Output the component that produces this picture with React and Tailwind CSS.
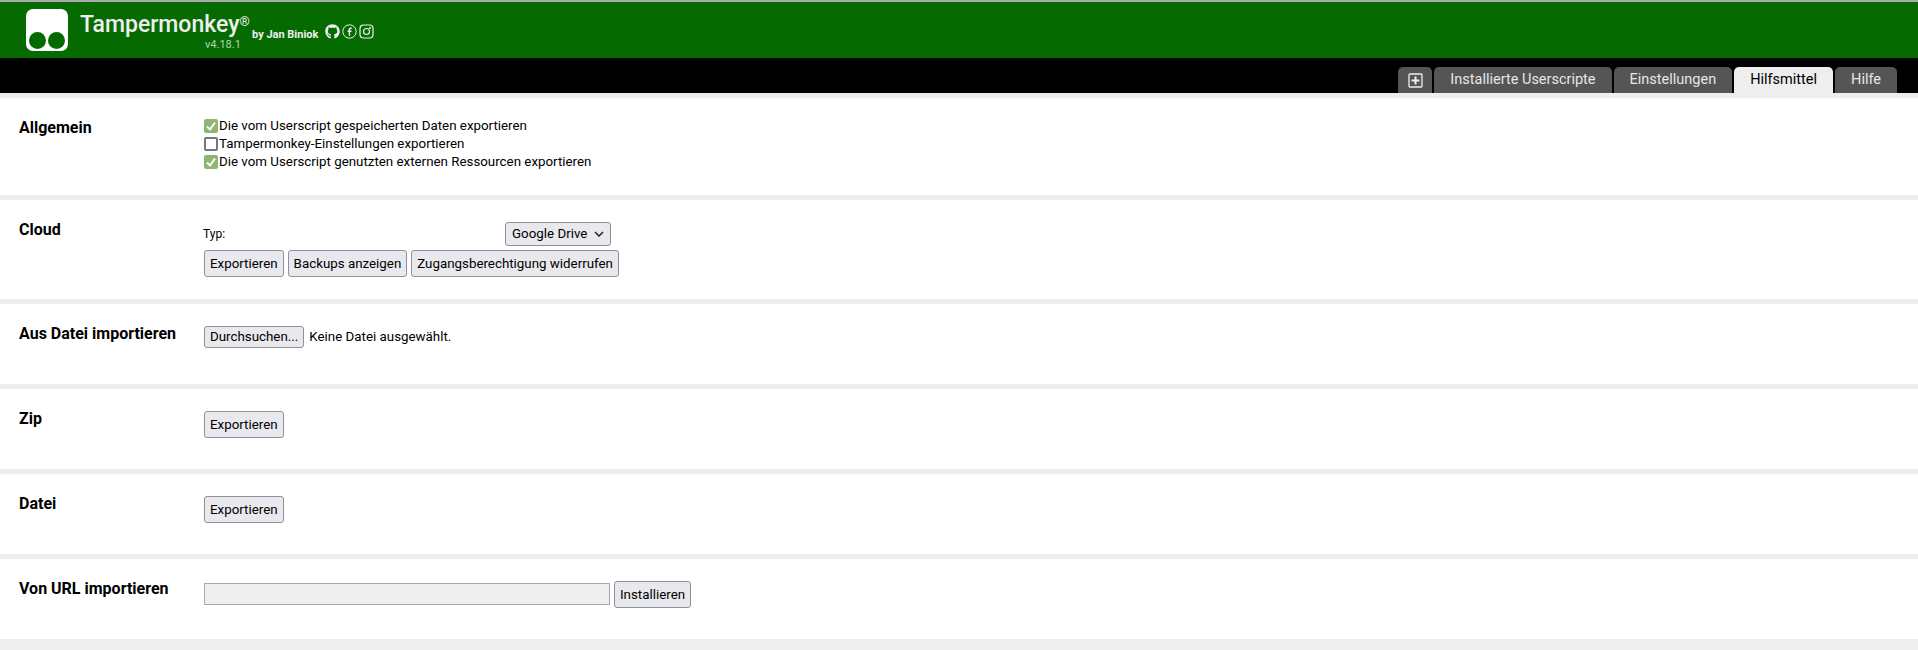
import React from "react";
import { FaGithub } from "react-icons/fa";

const sans = "font-['Roboto',sans-serif]";
const btn =
  "h-[27px] px-[5px] rounded-[3px] border border-[#8f8f9d] bg-[#e9e9ed] text-[13.33px] leading-none text-black";

const Logo = () => (
  <svg width="42" height="42" viewBox="0 0 42 42">
    <rect width="42" height="42" rx="7" fill="#fff" />
    <circle cx="11.5" cy="31.5" r="8.5" fill="#056b00" />
    <circle cx="30.5" cy="31.5" r="8.5" fill="#056b00" />
  </svg>
);

const Check = ({ checked }) =>
  checked ? (
    <span className="w-[14px] h-[14px] rounded-[2px] bg-[#8fb573] flex items-center justify-center shrink-0">
      <svg width="12" height="12" viewBox="0 0 12 12" fill="none" stroke="#fff" strokeWidth="2">
        <path d="M2 6.5 5 9.5 10 2.5" />
      </svg>
    </span>
  ) : (
    <span className="w-[14px] h-[14px] rounded-[2px] border-2 border-[#767680] bg-white shrink-0" />
  );

const Option = ({ checked, children }) => (
  <div className="flex items-center gap-px h-[18px] text-[13.33px] text-black">
    <Check checked={checked} />
    <span>{children}</span>
  </div>
);

const Section = ({ title, height, children }) => (
  <section className={`flex bg-white ${height}`}>
    <h3 className="w-[204px] shrink-0 pl-[19px] pt-[20px] text-[16px] leading-[19px] font-bold text-black">
      {title}
    </h3>
    <div className="flex-1">{children}</div>
  </section>
);

const Tab = ({ active, children }) => (
  <div
    className={`h-[26px] px-[16px] flex items-center rounded-t-[5px] text-[14.5px] ${
      active ? "bg-[#eeeeee] text-black" : "bg-[#555555] text-[#e6e6e6]"
    }`}
  >
    {children}
  </div>
);

export default function App() {
  return (
    <div className={`${sans} h-[650px] overflow-hidden bg-[#eeeeee]`}>
      {/* Kopfzeile */}
      <header className="h-[58px] border-t-2 border-[#aaaaaa] bg-[#056b00] flex items-start pl-[26px] text-white">
        <div className="pt-[7px]">
          <Logo />
        </div>
        <div className="ml-[12px] pt-[9px] w-[172px]">
          <div className="text-[23px] leading-[27px] font-medium text-[#eeeeee] whitespace-nowrap">
            Tampermonkey<sup className="text-[13px] font-normal">®</sup>
          </div>
          <div className="text-[11px] leading-[13px] text-[#b5d0b3] pl-[125px]">v4.18.1</div>
        </div>
        <div className="pt-[25px] text-[11px] font-bold text-[#eeeeee] whitespace-nowrap">by Jan Biniok</div>
        <div className="flex items-center gap-[2px] pt-[22px] pl-[7px] text-[#eeeeee]">
          <FaGithub size={15} />
          <svg width="15" height="15" viewBox="0 0 15 15" fill="none" stroke="currentColor">
            <circle cx="7.5" cy="7.5" r="6.7" />
            <path d="M9.7 4.2H8.6c-.8 0-1.2.5-1.2 1.2v6.4M5.6 7.3h3.9" strokeWidth="1.4" />
          </svg>
          <svg width="15" height="15" viewBox="0 0 15 15" fill="none" stroke="currentColor">
            <rect x="1" y="1" width="13" height="13" rx="3.5" strokeWidth="1.2" />
            <circle cx="7.5" cy="7.5" r="3" strokeWidth="1.2" />
            <circle cx="11" cy="4" r=".6" fill="currentColor" />
          </svg>
        </div>
      </header>

      {/* Tabs */}
      <nav className="h-[35px] bg-black flex items-end justify-end gap-[2px] pr-[21px]">
        <div className="h-[26px] w-[34px] rounded-t-[5px] bg-[#555555] flex items-center justify-center">
          <svg width="15" height="15" viewBox="0 0 15 15" fill="none" stroke="#eee">
            <rect x="1" y="1" width="13" height="13" rx="1" strokeWidth="1.3" />
            <path d="M7.5 3.5v8M3.5 7.5h8" strokeWidth="2" />
          </svg>
        </div>
        <Tab>Installierte Userscripte</Tab>
        <Tab>Einstellungen</Tab>
        <Tab active>Hilfsmittel</Tab>
        <Tab>Hilfe</Tab>
      </nav>

      <main className="pt-[5px] flex flex-col gap-[5px]">
        <Section title="Allgemein" height="h-[97px]">
          <div className="pt-[19px]">
            <Option checked>Die vom Userscript gespeicherten Daten exportieren</Option>
            <Option>Tampermonkey-Einstellungen exportieren</Option>
            <Option checked>Die vom Userscript genutzten externen Ressourcen exportieren</Option>
          </div>
        </Section>

        <Section title="Cloud" height="h-[99px]">
          <div className="pt-[22px] w-[407px]">
            <div className="flex items-center justify-between h-[24px] pr-[-4px] text-[12px] text-black">
              <span className="-ml-[1px]">Typ:</span>
              <span className="h-[24px] w-[106px] rounded-[3px] border border-[#8f8f9d] bg-[#e9e9ed] flex items-center justify-between px-[6px] text-[13.33px]">
                Google Drive
                <svg width="10" height="6" viewBox="0 0 10 6" fill="none" stroke="#222" strokeWidth="1.5">
                  <path d="M1 1l4 4 4-4" />
                </svg>
              </span>
            </div>
            <div className="flex gap-[4px] mt-[4px] whitespace-nowrap">
              <button className={btn}>Exportieren</button>
              <button className={btn}>Backups anzeigen</button>
              <button className={btn}>Zugangsberechtigung widerrufen</button>
            </div>
          </div>
        </Section>

        <Section title="Aus Datei importieren" height="h-[80px]">
          <div className="pt-[22px] flex items-center gap-[5px] text-[13.33px] text-black">
            <button className="h-[22px] px-[5px] rounded-[3px] border border-[#8f8f9d] bg-[#e9e9ed] text-[13.33px] leading-none">
              Durchsuchen...
            </button>
            <span>Keine Datei ausgewählt.</span>
          </div>
        </Section>

        <Section title="Zip" height="h-[80px]">
          <div className="pt-[22px]">
            <button className={btn}>Exportieren</button>
          </div>
        </Section>

        <Section title="Datei" height="h-[80px]">
          <div className="pt-[22px]">
            <button className={btn}>Exportieren</button>
          </div>
        </Section>

        <Section title="Von URL importieren" height="h-[80px]">
          <div className="pt-[22px] flex items-start gap-[4px]">
            <input
              type="text"
              disabled
              className="mt-[2px] w-[406px] h-[22px] border border-[#aaaaaa] bg-[#eeeeee]"
            />
            <button className={btn}>Installieren</button>
          </div>
        </Section>
      </main>
    </div>
  );
}
